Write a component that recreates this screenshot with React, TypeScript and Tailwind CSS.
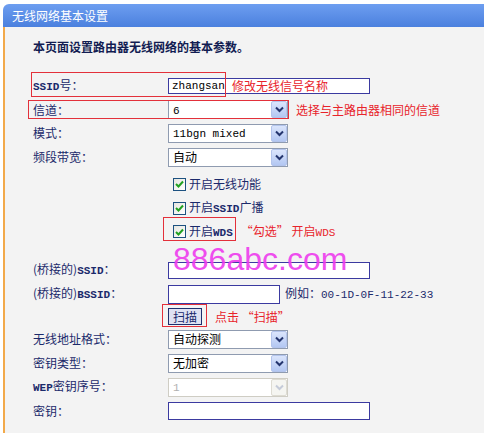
import type { ReactNode } from 'react';

const CJK = '"Noto Sans CJK SC", "Liberation Sans", sans-serif';

// latin run in the old bitmap-ish form font
function L({ children }: { children: ReactNode }) {
  return <span className="font-['Liberation_Mono',monospace] text-[11px] font-semibold">{children}</span>;
}

function Arrow({ disabled }: { disabled?: boolean }) {
  return (
    <span
      className={`flex h-[17px] w-[16px] items-center justify-center rounded-[2px] border ${
        disabled
          ? 'border-[#dedcd3] bg-[#f5f5f1]'
          : 'border-[#b3c4ec] bg-gradient-to-b from-[#dbe5fc] to-[#b3c7f2]'
      }`}
    >
      <svg width="9" height="7" viewBox="0 0 9 7">
        <path
          d="M1 1.5 L4.5 5 L8 1.5"
          fill="none"
          stroke={disabled ? '#c5cbd8' : '#24356e'}
          strokeWidth="2"
        />
      </svg>
    </span>
  );
}

function Select({ value, disabled, latin }: { value: string; disabled?: boolean; latin?: boolean }) {
  return (
    <div
      className={`flex h-[19px] w-[120px] items-center border bg-white ${
        disabled ? 'border-[#cfcdc4] text-[#b0b0b0]' : 'border-[#8f9bb0] text-black'
      }`}
    >
      <span className="flex-1 pl-[4px] text-[12px] leading-none">
        {latin ? <span className="font-['Liberation_Mono',monospace] text-[11px]">{value}</span> : value}
      </span>
      <Arrow disabled={disabled} />
    </div>
  );
}

function Input({ w, h, children }: { w: string; h: string; children?: ReactNode }) {
  return (
    <div className={`flex items-center border border-[#3b3aa0] bg-white pl-[3px] ${w} ${h}`}>{children}</div>
  );
}

function Check({ children }: { children: ReactNode }) {
  return (
    <div className="flex items-center gap-[3px]">
      <span className="flex h-[13px] w-[13px] items-center justify-center border border-[#1c5180] bg-gradient-to-br from-[#e6e6e0] to-white">
        <svg width="9" height="8" viewBox="0 0 9 8">
          <path d="M1 4 L3.5 6.5 L8 1.5" fill="none" stroke="#21a121" strokeWidth="2" />
        </svg>
      </span>
      <span className="text-[12px] text-[#1b2a6b]">{children}</span>
    </div>
  );
}

function Row({ label, h, children }: { label?: ReactNode; h: string; children?: ReactNode }) {
  return (
    <div className={`flex items-center ${h}`}>
      <div className="w-[135px] shrink-0 text-[12px] text-[#1b2a6b]">{label}</div>
      <div className="flex items-center">{children}</div>
    </div>
  );
}

export default function App() {
  return (
    <div className="relative h-[433px] w-[484px] overflow-hidden bg-white pl-[3px] pt-[4px]" style={{ fontFamily: CJK }}>
      <div className="flex h-[23px] items-center rounded-tl-[6px] bg-gradient-to-b from-[#6d9ef0] to-[#4b80de] pl-[9px] text-[12px] text-white">
        无线网络基本设置
      </div>
      <div className="h-[406px] border-l-2 border-[#f2a94a] bg-[#f3f3f3] pl-[28px] pt-[12px]">
        <div className="h-[16px] text-[12px] font-bold leading-[16px] text-[#121c52]">本页面设置路由器无线网络的基本参数。</div>

        <div className="mt-[19px]">
          <Row label={<><L>SSID</L>号：</>} h="h-[24px]">
            <Input w="w-[202px]" h="h-[16px]">
              <span className="font-['Liberation_Mono',monospace] text-[11px] text-black">zhangsan</span>
            </Input>
          </Row>
          <Row label="信道：" h="h-[23px]">
            <Select value="6" latin />
            <span className="ml-[8px] text-[12px] text-[#e8232b]">选择与主路由器相同的信道</span>
          </Row>
          <Row label="模式：" h="h-[24px]">
            <Select value="11bgn mixed" latin />
          </Row>
          <Row label="频段带宽：" h="h-[24px]">
            <Select value="自动" />
          </Row>
          <div className="mt-[3px]">
            <Row h="h-[24px]">
              <div className="pl-[5px]">
                <Check>开启无线功能</Check>
              </div>
            </Row>
            <Row h="h-[24px]">
              <div className="pl-[5px]">
                <Check>
                  开启<L>SSID</L>广播
                </Check>
              </div>
            </Row>
            <Row h="h-[23px]">
              <div className="pl-[5px]">
                <Check>
                  开启<L>WDS</L>
                </Check>
              </div>
              <span className="ml-[8px] text-[12px] text-[#e8232b]">
                “勾选” 开启<span className="font-['Liberation_Mono',monospace] text-[11px]">WDS</span>
              </span>
            </Row>
          </div>
          <div className="mt-[15px]">
            <Row label={<>(桥接的)<L>SSID</L>：</>} h="h-[24px]">
              <Input w="w-[202px]" h="h-[17px]" />
            </Row>
            <Row label={<>(桥接的)<L>BSSID</L>：</>} h="h-[24px]">
              <Input w="w-[112px]" h="h-[19px]" />
              <span className="ml-[5px] text-[12px] text-[#1b2a6b]">
                例如：<span className="font-['Liberation_Mono',monospace] text-[11px]">00-1D-0F-11-22-33</span>
              </span>
            </Row>
            <Row h="h-[21px]">
              <button className="flex h-[17px] w-[34px] items-center justify-center border border-[#1d2f6e] bg-[#dfe2f2] text-[12px] leading-none text-[#1b2a6b]">
                扫描
              </button>
              <span className="ml-[13px] text-[12px] text-[#e8232b]">点击 “扫描”</span>
            </Row>
            <Row label="无线地址格式：" h="h-[24px]">
              <Select value="自动探测" />
            </Row>
            <Row label="密钥类型：" h="h-[24px]">
              <Select value="无加密" />
            </Row>
            <Row label={<><L>WEP</L>密钥序号：</>} h="h-[24px]">
              <Select value="1" latin disabled />
            </Row>
            <Row label="密钥：" h="h-[24px]">
              <Input w="w-[202px]" h="h-[18px]" />
            </Row>
          </div>
        </div>
      </div>

      {/* red annotation boxes */}
      <div className="pointer-events-none absolute left-[31px] top-[72px] h-[25px] w-[195px] border border-[#e3303a]" />
      <div className="pointer-events-none absolute left-[28px] top-[100px] h-[19px] w-[261px] border border-[#e3303a]" />
      <div className="pointer-events-none absolute left-[163px] top-[217px] h-[24px] w-[73px] border border-[#e3303a]" />
      <div className="pointer-events-none absolute left-[162px] top-[304px] h-[23px] w-[45px] border border-[#e3303a]" />
      <span className="absolute left-[232px] top-[78px] text-[12px] leading-[16px] text-[#e8232b]">修改无线信号名称</span>

      {/* watermark */}
      <div className="pointer-events-none absolute left-[173px] top-[243px] font-['Liberation_Sans',Arial,sans-serif] text-[32px] leading-[32px] text-[#ee3cee] opacity-90">
        886abc.com
      </div>
    </div>
  );
}
